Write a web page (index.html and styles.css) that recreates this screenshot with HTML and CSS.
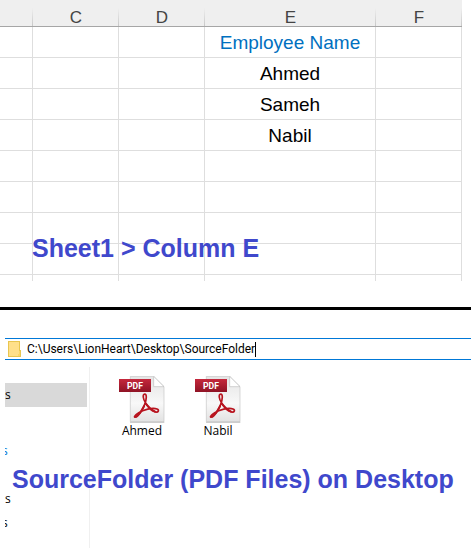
FILE: index.html
```html
<!DOCTYPE html>
<html lang="en">

<head>
  <meta charset="UTF-8">
  <meta name="viewport" content="width=device-width, initial-scale=1.0">
  <title>Employee PDF Files</title>
  <link rel="stylesheet" href="styles.css">
</head>

<body>
  <!-- Shared PDF icon -->
  <svg class="icon-defs" aria-hidden="true">
    <defs>
      <linearGradient id="pageFill" x1="0" y1="0" x2="0" y2="1">
        <stop offset="0" stop-color="#e4e4e4" />
        <stop offset="0.6" stop-color="#f8f8f8" />
        <stop offset="1" stop-color="#e2e2e2" />
      </linearGradient>
      <linearGradient id="bannerFill" x1="0" y1="0" x2="0" y2="1">
        <stop offset="0" stop-color="#c5283c" />
        <stop offset="1" stop-color="#8f1325" />
      </linearGradient>
    </defs>
    <symbol id="pdfIcon" viewBox="0 0 138 141">
      <path d="M34 1H104L135 32V137H34Z" fill="url(#pageFill)" stroke="#c6c6c6" stroke-width="2" />
      <path d="M104 1V32H135Z" fill="#fff" stroke="#bdbdbd" stroke-width="2" />
      <path d="M33 139H136" stroke="#a9a9a9" stroke-width="2" />
      <path d="M77 54C70 55 72 70 80 81C87 93 98 105 109 108C119 110 121 102 114 99C100 94 73 101 58 111C45 119 44 125 50 123C58 121 71 101 77 85C83 69 84 54 77 54Z" fill="none" stroke="#b8141f" stroke-width="5" stroke-linejoin="round" />
      <path d="M75 91C69 104 60 115 51 122M82 85C89 94 98 102 108 107" fill="none" stroke="#b8141f" stroke-width="6" stroke-linecap="round" />
      <rect x="0" y="9" width="96" height="39" fill="url(#bannerFill)" />
      <text x="48" y="38" text-anchor="middle" class="pdf-text">PDF</text>
    </symbol>
  </svg>

  <!-- Worksheet -->
  <section class="sheet">
    <table class="grid">
      <colgroup>
        <col class="col-edge">
        <col class="col-small">
        <col class="col-small">
        <col>
        <col class="col-small">
      </colgroup>
      <thead>
        <tr><th></th><th scope="col">C</th><th scope="col">D</th><th scope="col">E</th><th scope="col">F</th></tr>
      </thead>
      <tbody>
        <tr><td></td><td></td><td></td><td class="field-name">Employee Name</td><td></td></tr>
        <tr><td></td><td></td><td></td><td>Ahmed</td><td></td></tr>
        <tr><td></td><td></td><td></td><td>Sameh</td><td></td></tr>
        <tr><td></td><td></td><td></td><td>Nabil</td><td></td></tr>
        <tr><td></td><td></td><td></td><td></td><td></td></tr>
        <tr><td></td><td></td><td></td><td></td><td></td></tr>
        <tr><td></td><td></td><td></td><td></td><td></td></tr>
        <tr><td></td><td></td><td></td><td></td><td></td></tr>
        <tr class="cut-row"><td></td><td></td><td></td><td></td><td></td></tr>
      </tbody>
    </table>
    <h2 class="note note-sheet">Sheet1 &gt; Column E</h2>
  </section>

  <hr class="divider">

  <!-- Explorer window -->
  <section class="explorer">
    <div class="address-bar">
      <svg class="folder-icon" viewBox="0 0 13 16" aria-hidden="true">
        <path d="M0 0H12V9H13V16H0Z" fill="#e9c64f" />
        <path d="M1 1H11V15H1Z" fill="#ffe08a" />
        <path d="M11 10H12V15H10V13H11Z" fill="#fbd667" />
      </svg>
      <input class="address" type="text" aria-label="Address" value="C:\Users\LionHeart\Desktop\SourceFolder" size="36">
      <span class="caret"></span>
    </div>

    <div class="window-body">
      <nav class="sidebar" aria-label="Folders">
        <a href="#" class="side-item active">s</a>
        <a href="#" class="side-item link-item"><span class="cut">s</span></a>
        <a href="#" class="side-item">s</a>
        <a href="#" class="side-item"><span class="cut">s</span></a>
      </nav>

      <main class="files">
        <button class="file" type="button">
          <svg class="file-icon" aria-hidden="true"><use href="#pdfIcon" /></svg>
          <span>Ahmed</span>
        </button>
        <button class="file" type="button">
          <svg class="file-icon" aria-hidden="true"><use href="#pdfIcon" /></svg>
          <span>Nabil</span>
        </button>
      </main>
    </div>
    <h2 class="note note-folder">SourceFolder (PDF Files) on Desktop</h2>
  </section>
</body>

</html>
```
FILE: styles.css
```css
/* Base Styles */
body {
  margin: 0;
  background: #fff;
  color: #000;
  font-family: 'Liberation Sans', Arial, sans-serif;
}

.icon-defs {
  position: absolute;
  width: 0;
  height: 0;
}

/* Worksheet */
.sheet {
  position: relative;
  padding-right: 9px;
}

.grid {
  width: 100%;
  table-layout: fixed;
  border-collapse: separate;
  border-spacing: 0;
}

.col-edge {
  width: 33px;
}

.col-small {
  width: 86px;
}

.grid th,
.grid td {
  box-sizing: border-box;
  height: 31px;
  padding: 2px 0 0;
  border-right: 1px solid #dedede;
  border-bottom: 1px solid #dedede;
  font-size: 19px;
  line-height: 22px;
  text-align: center;
  white-space: nowrap;
}

.grid th {
  height: 27px;
  padding-top: 10px;
  border-right: 0;
  border-bottom-color: #a6a6a6;
  background: linear-gradient(#efefef, #c8c8c8) right bottom / 1px 18px no-repeat, #efefef;
  color: #444;
  font-size: 17px;
  font-weight: 400;
  line-height: 16px;
}

.grid .field-name {
  color: #0070c0;
}

.grid .cut-row td {
  height: 6px;
  border-bottom: 0;
}

/* Notes over the windows */
.note {
  position: absolute;
  margin: 0;
  color: #3f48cc;
  font-family: 'Liberation Sans', Arial, sans-serif;
  font-size: 25px;
  font-weight: 700;
  line-height: 30px;
  white-space: nowrap;
}

.note-sheet {
  left: 32px;
  bottom: 18px;
}

.note-folder {
  left: 12px;
  bottom: 54px;
}

.divider {
  height: 3px;
  margin: 26px 0 28px;
  border: 0;
  background: #000;
}

/* Explorer */
.explorer {
  position: relative;
  padding-left: 5px;
  font-family: 'Open Sans', 'Segoe UI', sans-serif;
  font-size: 12px;
}

.address-bar {
  display: flex;
  align-items: center;
  height: 20px;
  padding-left: 3px;
  border-top: 1px solid #0078d7;
  border-bottom: 1px solid #0078d7;
}

.folder-icon {
  width: 13px;
  height: 16px;
  margin-right: 6px;
}

.address {
  field-sizing: content;
  height: 18px;
  padding: 0;
  border: 0;
  outline: none;
  background: none;
  color: #000;
  font-family: Roboto, 'Segoe UI', sans-serif;
  font-size: 12px;
}

.caret {
  width: 1px;
  height: 15px;
  background: #000;
}

.window-body {
  display: flex;
  padding-top: 7px;
}

/* Sidebar */
.sidebar {
  display: flex;
  flex-direction: column;
  width: 84px;
  padding: 16px 0 13px;
  border-right: 1px solid #f0f0f0;
}

.side-item {
  height: 24px;
  margin-right: 2px;
  overflow: hidden;
  color: #000;
  line-height: 24px;
  text-decoration: none;
}

.side-item.active {
  background: #d9d9d9;
}

.link-item {
  margin-top: 32px;
  margin-bottom: 24px;
  color: #0078d7;
}

.cut {
  margin-left: -3px;
}

/* Files */
.files {
  display: flex;
  align-items: flex-start;
  padding: 9px 0 0 14px;
}

.file {
  display: flex;
  flex-direction: column;
  align-items: center;
  width: 76px;
  padding: 0;
  border: 0;
  background: none;
  color: #000;
  font: inherit;
  line-height: 16px;
}

.file-icon {
  width: 46px;
  height: 47px;
}

.pdf-text {
  fill: #fff;
  font-family: Roboto, sans-serif;
  font-size: 26px;
  font-weight: 700;
}
```
